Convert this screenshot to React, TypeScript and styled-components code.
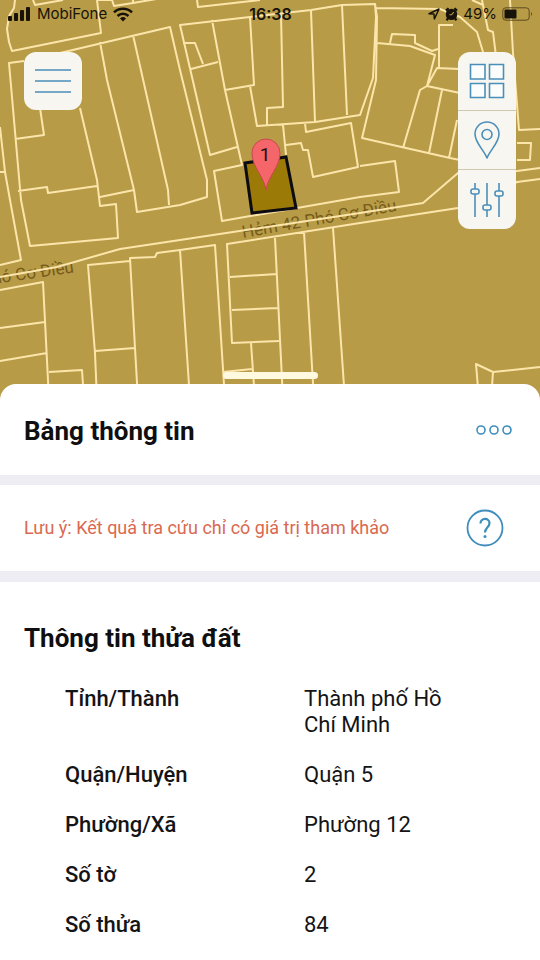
import React from "react";
import styled, { createGlobalStyle } from "styled-components";

const GlobalStyle = createGlobalStyle`
  *, *::before, *::after { box-sizing: border-box; }
  body {
    margin: 0;
    background: #fff;
    color: #141416;
    font-family: Roboto, "Noto Sans", sans-serif;
  }
  h1, h2, p, dl, dd { margin: 0; }
`;

const Screen = styled.main`
  display: flex;
  flex-direction: column;
  min-height: 100vh;
  overflow-x: hidden;
`;

const MapArea = styled.header`
  position: relative;
  display: flex;
  flex-direction: column;
  height: 400px;
  background: #b89b46;
`;

const MapDrawing = styled.svg`
  position: absolute;
  inset: 0;
  width: 100%;
  height: 100%;
`;

const StatusBar = styled.div`
  position: relative;
  display: grid;
  grid-template-columns: 1fr auto 1fr;
  align-items: center;
  height: 28px;
  padding: 0 7px 0 8px;
  color: #17130a;
  font-family: Inter, "Liberation Sans", sans-serif;
  font-size: 15px;
  line-height: 20px;
`;

const StatusGroup = styled.div<{ $end?: boolean }>`
  display: flex;
  align-items: center;
  justify-content: ${(p) => (p.$end ? "flex-end" : "flex-start")};
  gap: ${(p) => (p.$end ? 5 : 6)}px;
`;

const Clock = styled.time`
  font-size: 16px;
  font-weight: 600;
`;

const MapControls = styled.div`
  position: relative;
  display: flex;
  align-items: flex-start;
  justify-content: space-between;
  padding: 24px 24px 0;
`;

const ControlStack = styled.div`
  display: flex;
  flex-direction: column;
  overflow: hidden;
  border-radius: 12px;
`;

const MapButton = styled.button<{ $single?: boolean }>`
  display: grid;
  place-items: center;
  width: 58px;
  height: ${(p) => (p.$single ? 58 : 59)}px;
  padding: 0;
  border: 0;
  border-bottom: ${(p) => (p.$single ? 0 : 1)}px solid #cfc7ae;
  border-radius: ${(p) => (p.$single ? 12 : 0)}px;
  background: #f8f6f0;
  color: #4a8fb9;
  &:last-child { border-bottom: 0; }
`;

const Sheet = styled.section`
  position: relative;
  flex: 1;
  margin-top: -16px;
  border-radius: 16px 16px 0 0;
  background: #fff;
`;

const DragHandle = styled.div`
  position: absolute;
  top: -12px;
  left: 50%;
  width: 95px;
  height: 7px;
  margin-left: -47px;
  border-radius: 4px;
  background: #fff9df;
`;

const SheetHeader = styled.div`
  display: flex;
  align-items: center;
  justify-content: space-between;
  height: 91px;
  padding: 2px 28px 0 24px;
`;

const Heading = styled.h2`
  color: #0f0f11;
  font-size: 26px;
  font-weight: 700;
  line-height: 32px;
`;

const IconButton = styled.button`
  display: grid;
  place-items: center;
  padding: 0;
  border: 0;
  background: none;
  color: #3f8dbd;
`;

const Notice = styled.div`
  display: flex;
  align-items: center;
  justify-content: space-between;
  height: 107px;
  padding: 0 36px 0 24px;
  border: solid #eeedf3;
  border-width: 10px 0 11px;
`;

const NoticeText = styled.p`
  color: #d9694f;
  font-size: 18px;
  line-height: 24px;
`;

const Details = styled.section`
  padding: 40px 24px 24px;
`;

const DetailList = styled.dl`
  display: flex;
  flex-direction: column;
  gap: 24px;
  padding: 32px 56px 0 41px;
`;

const DetailRow = styled.div`
  display: grid;
  grid-template-columns: 239px minmax(0, 155px);
  font-size: 22px;
  line-height: 26px;
`;

const Term = styled.dt`
  font-weight: 500;
`;

const Value = styled.dd``;

const parcels = [
  "M15 0 L14 8 L9 16 L7 29 L9 42 L12 51 L101 33 L97 0",
  "M33 0 L35 5 L63 0 M97 0 L112 0 L114 6 L133 3 L180 -5 M133 3 V0",
  "M24 61 L9 63 L21 200 L30 246 L118 238 L116 204 L100 206 L97 180 L80 108",
  "M60 53 L170 27 L180 70 L207 180 L207 197 L180 205 L137 212 L134 190 L107 80 L100 42",
  "M133 35 L168 190 L169 205",
  "M40 108 L44 135 L15 139",
  "M18 191 L47 187 L48 193 L97 186 M100 197 L134 190",
  "M0 127 L5 172 L10 200 L21 260 L0 265 M0 172 H5",
  "M0 277 L57 267 L120 249 L180 240 L360 213 L423 203 L458 173 L517 171 L540 168",
  "M0 290 L43 282 L49 400 M0 328 L45 322 M0 361 L47 353 M49 372 L82 370 L84 400",
  "M97 400 L95 353 L88 265 L130 261 M138 400 L135 348 L130 258 L155 257 L157 253 L180 250 L215 245 L225 400 M95 351 L135 348",
  "M180 250 L190 400",
  "M540 179 L517 182 L458 208 L360 223 L227 244 L232 343 L279 341",
  "M230 277 L277 274 M232 310 L278 308 M275 238 L283 400 M304 232 L314 400 M333 228 L345 400",
  "M251 343 L255 400 M223 372 L252 369",
  "M237 147 L210 155 L180 25 L250 17 L311 10 L342 5 L375 4 L376 17 L373 78 L360 115 L315 122 L257 126 L250 86",
  "M212 20 L225 90 L242 165 L214 171 L222 221 L360 197 L399 192 L395 161 L360 166",
  "M183 43 L195 43 L203 64 M191 69 L218 62 M225 90 L254 85 L250 17",
  "M281 14 L283 107 L267 108 V125 M311 10 L315 122 M342 5 L347 115",
  "M305 123 L306 132 L351 123 L358 167 L313 177 L308 150 L303 150 L301 143 L286 145 M283 125 L286 155",
  "M197 0 L198 7 L260 0",
  "M375 4 L377 17 L376 80 L362 138 L450 158 L460 160",
  "M376 8 L440 9 L460 17 L477 32 L483 52",
  "M377 43 L410 46 L435 55 L427 86 L420 90 L403 148",
  "M390 43 L392 34 L415 35 L415 43 L432 51 L438 49",
  "M453 25 H439 V68 H437 L427 86 L460 93 M437 68 L460 69",
  "M442 90 L429 153 M457 120 L449 158",
  "M472 0 L483 5 M482 0 L488 30 L493 32 L496 56",
  "M510 0 L513 53 L519 130 L540 129 M517 143 H531 L530 160 H517",
  "M540 367 L493 372 L476 364 L479 400 M493 372 L491 400",
];

const CadastralMap = () => (
  <MapDrawing viewBox="0 0 540 400" preserveAspectRatio="xMidYMin slice" aria-hidden="true">
    <rect width="540" height="400" fill="#b89b46" />
    <g fill="#755b1c" fontFamily='Roboto, "Noto Sans", sans-serif' fontSize="17">
      <text transform="translate(-7 284) rotate(-8)">hó Cơ Điều</text>
      <text transform="translate(243 238) rotate(-10)">Hẻm 42 Phó Cơ Điều</text>
    </g>
    <path d={parcels.join(" ")} fill="none" stroke="#fbe5ab" strokeWidth="2" strokeLinejoin="round" />
    <path d="M245 163 L286 157 L296 208 L252 213 Z" fill="#9c7a08" stroke="#0d0b12" strokeWidth="3" />
    <path d="M266 190 C264 176 252 167 252 153 A14 14 0 0 1 280 153 C280 167 268 176 266 190 Z" fill="#f4666a" stroke="#c8494d" strokeWidth="1" />
    <text x="265" y="161" textAnchor="middle" fill="#26100f" fontFamily="Roboto, sans-serif" fontSize="19">1</text>
  </MapDrawing>
);

const SignalIcon = () => (
  <svg width="23" height="14" viewBox="0 0 23 14" fill="currentColor" aria-hidden="true">
    <rect x="0" y="9" width="4" height="5" rx="1" />
    <rect x="6" y="6" width="4" height="8" rx="1" />
    <rect x="12" y="3" width="4" height="11" rx="1" />
    <rect x="18" y="0" width="4" height="14" rx="1" />
  </svg>
);

const WifiIcon = () => (
  <svg width="20" height="15" viewBox="0 0 20 15" fill="none" stroke="currentColor" strokeWidth="2.6" aria-hidden="true">
    <path d="M1 5.4 A13 13 0 0 1 19 5.4" />
    <path d="M4.5 9 A8 8 0 0 1 15.5 9" />
    <path d="M10 14.5 L7 11.4 A4.5 4.5 0 0 1 13 11.4 Z" fill="currentColor" stroke="none" />
  </svg>
);

const LocationIcon = () => (
  <svg width="12" height="12" viewBox="0 0 12 12" fill="none" stroke="currentColor" strokeWidth="1.5" strokeLinejoin="round" aria-hidden="true">
    <path d="M1 5.8 L11 1 L6.4 11 L6 6 Z" />
  </svg>
);

const AlarmIcon = () => (
  <svg width="13" height="14" viewBox="0 0 13 14" aria-hidden="true">
    <circle cx="6.5" cy="7.4" r="5.7" fill="currentColor" />
    <path d="M1 3.6 L3.6 1.2 M9.4 1.2 L12 3.6 M3 11.5 L1.5 13.3 M10 11.5 L11.5 13.3" fill="none" stroke="currentColor" strokeWidth="2.2" />
    <path d="M6.5 7.8 L8.8 5 M6.5 7.8 H4.4" fill="none" stroke="#b89b46" strokeWidth="1.1" />
  </svg>
);

const BatteryIcon = () => (
  <svg width="31" height="14" viewBox="0 0 31 14" aria-hidden="true">
    <rect x="0.8" y="0.8" width="26.4" height="12.4" rx="3" fill="none" stroke="#5c4a20" strokeWidth="1" />
    <rect x="2.5" y="2.5" width="12" height="9" rx="1" fill="currentColor" />
    <path d="M29 5 Q31 7 29 9 Z" fill="#5c4a20" />
  </svg>
);

const MenuIcon = () => (
  <svg width="38" height="26" viewBox="0 0 38 26" fill="none" stroke="currentColor" strokeWidth="1.6" aria-hidden="true">
    <path d="M1 2 H37 M1 13 H37 M1 24 H37" />
  </svg>
);

const GridIcon = () => (
  <svg width="36" height="36" viewBox="0 0 36 36" fill="#fbfdfd" stroke="currentColor" strokeWidth="1.6" aria-hidden="true">
    <path d="M1.5 1.5 H16 V16 H1.5 Z M20.5 1.5 H34.5 V16 H20.5 Z M1.5 20.5 H16 V34.5 H1.5 Z M20.5 20.5 H34.5 V34.5 H20.5 Z" />
  </svg>
);

const PinIcon = () => (
  <svg width="26" height="38" viewBox="0 0 26 38" fill="none" stroke="currentColor" strokeWidth="1.6" strokeLinejoin="round" aria-hidden="true">
    <path d="M13 37 C10 29 1 22 1 13 A12 12 0 0 1 25 13 C25 22 16 29 13 37 Z" />
    <circle cx="13" cy="13.5" r="5" />
  </svg>
);

const SlidersIcon = () => (
  <svg width="36" height="34" viewBox="0 0 36 34" fill="#f8f6f0" stroke="currentColor" strokeWidth="1.6" aria-hidden="true">
    <path d="M6 0 V34 M18 0 V34 M30 0 V34" />
    <rect x="2" y="6" width="8" height="5" rx="2" />
    <rect x="14" y="22" width="8" height="5" rx="2" />
    <rect x="26" y="8" width="8" height="5" rx="2" />
  </svg>
);

const MoreIcon = () => (
  <svg width="36" height="12" viewBox="0 0 36 12" fill="none" stroke="currentColor" strokeWidth="1.6" aria-hidden="true">
    <circle cx="5" cy="5" r="4" />
    <circle cx="18" cy="5" r="4" />
    <circle cx="31" cy="5" r="4" />
  </svg>
);

const HelpIcon = () => (
  <svg width="38" height="38" viewBox="0 0 38 38" fill="none" stroke="currentColor" strokeWidth="1.8" aria-hidden="true">
    <circle cx="19" cy="19" r="17.5" />
    <path d="M14.5 14.5 C14.5 8.5 23.5 8.5 23.5 14.2 C23.5 18 19 18.5 19 23.5" strokeWidth="2.2" />
    <circle cx="19" cy="27.5" r="1.5" fill="currentColor" stroke="none" />
  </svg>
);

const details = [
  { label: "Tỉnh/Thành", value: "Thành phố Hồ Chí Minh" },
  { label: "Quận/Huyện", value: "Quận 5" },
  { label: "Phường/Xã", value: "Phường 12" },
  { label: "Số tờ", value: "2" },
  { label: "Số thửa", value: "84" },
];

export default function App() {
  return (
    <>
      <GlobalStyle />
      <Screen>
        <MapArea>
          <CadastralMap />
          <StatusBar>
            <StatusGroup>
              <SignalIcon />
              <span>MobiFone</span>
              <WifiIcon />
            </StatusGroup>
            <Clock>16:38</Clock>
            <StatusGroup $end>
              <LocationIcon />
              <AlarmIcon />
              <span>49%</span>
              <BatteryIcon />
            </StatusGroup>
          </StatusBar>
          <MapControls>
            <MapButton $single type="button" aria-label="Menu">
              <MenuIcon />
            </MapButton>
            <ControlStack>
              <MapButton type="button" aria-label="Lớp bản đồ">
                <GridIcon />
              </MapButton>
              <MapButton type="button" aria-label="Vị trí">
                <PinIcon />
              </MapButton>
              <MapButton type="button" aria-label="Bộ lọc">
                <SlidersIcon />
              </MapButton>
            </ControlStack>
          </MapControls>
        </MapArea>
        <Sheet>
          <DragHandle />
          <SheetHeader>
            <Heading as="h1">Bảng thông tin</Heading>
            <IconButton type="button" aria-label="Thêm">
              <MoreIcon />
            </IconButton>
          </SheetHeader>
          <Notice>
            <NoticeText>Lưu ý: Kết quả tra cứu chỉ có giá trị tham khảo</NoticeText>
            <IconButton type="button" aria-label="Trợ giúp">
              <HelpIcon />
            </IconButton>
          </Notice>
          <Details>
            <Heading>Thông tin thửa đất</Heading>
            <DetailList>
              {details.map((d) => (
                <DetailRow key={d.label}>
                  <Term>{d.label}</Term>
                  <Value>{d.value}</Value>
                </DetailRow>
              ))}
            </DetailList>
          </Details>
        </Sheet>
      </Screen>
    </>
  );
}
